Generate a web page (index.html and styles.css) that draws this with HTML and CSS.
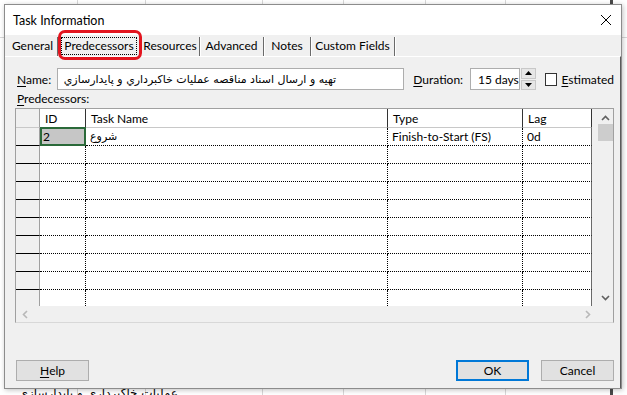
FILE: index.html
```html
<!DOCTYPE html>
<html>
<head>
<meta charset="utf-8">
<link rel="stylesheet" href="styles.css">
</head>
<body>
<div class="backdrop">
  <div class="back-text" dir="rtl">عمليات خاکبرداري و پايدارسازي</div>
</div>
<div class="dialog">
  <div class="titlebar">
    <span class="title">Task Information</span>
    <svg class="close" width="12" height="12" viewBox="0 0 12 12"><path d="M1 1 L11 11 M11 1 L1 11" stroke="#000" stroke-width="1" fill="none"/></svg>
  </div>
  <div class="tabs">
    <div class="tab t-gen">General</div>
    <div class="tab t-pred active"><span class="focus">Predecessors</span><span class="mark"></span></div>
    <div class="tab t-res">Resources</div>
    <div class="tab t-adv">Advanced</div>
    <div class="tab t-notes">Notes</div>
    <div class="tab t-cf">Custom Fields</div>
  </div>
  <div class="panel">
    <div class="row-name">
      <label class="lbl-name"><u>N</u>ame:</label>
      <div class="input name-input">تهيه و ارسال اسناد مناقصه عمليات خاکبرداري و پايدارسازي</div>
      <label class="lbl-dur"><u>D</u>uration:</label>
      <div class="input dur-input">15 days</div>
      <div class="spin">
        <div class="spin-btn"><svg width="7" height="4" viewBox="0 0 7 4"><path d="M0 4 L3.5 0 L7 4 Z" fill="#000"/></svg></div>
        <div class="spin-btn"><svg width="7" height="4" viewBox="0 0 7 4"><path d="M0 0 L3.5 4 L7 0 Z" fill="#000"/></svg></div>
      </div>
      <div class="check"></div>
      <label class="lbl-est"><u>E</u>stimated</label>
    </div>
    <div class="lbl-pred"><u>P</u>redecessors:</div>
    <div class="grid">
      <div class="table">
        <div class="tr head">
          <div class="td rh"></div>
          <div class="td c-id">ID</div>
          <div class="td c-name">Task Name</div>
          <div class="td c-type">Type</div>
          <div class="td c-lag">Lag</div>
        </div>
        <div class="tr">
          <div class="td rh"></div>
          <div class="td c-id sel">2</div>
          <div class="td c-name"><span dir="rtl">شروع</span></div>
          <div class="td c-type">Finish-to-Start (FS)</div>
          <div class="td c-lag">0d</div>
        </div>
        <div class="tr"><div class="td rh"></div><div class="td c-id"></div><div class="td c-name"></div><div class="td c-type"></div><div class="td c-lag"></div></div>
        <div class="tr"><div class="td rh"></div><div class="td c-id"></div><div class="td c-name"></div><div class="td c-type"></div><div class="td c-lag"></div></div>
        <div class="tr"><div class="td rh"></div><div class="td c-id"></div><div class="td c-name"></div><div class="td c-type"></div><div class="td c-lag"></div></div>
        <div class="tr"><div class="td rh"></div><div class="td c-id"></div><div class="td c-name"></div><div class="td c-type"></div><div class="td c-lag"></div></div>
        <div class="tr"><div class="td rh"></div><div class="td c-id"></div><div class="td c-name"></div><div class="td c-type"></div><div class="td c-lag"></div></div>
        <div class="tr"><div class="td rh"></div><div class="td c-id"></div><div class="td c-name"></div><div class="td c-type"></div><div class="td c-lag"></div></div>
        <div class="tr"><div class="td rh"></div><div class="td c-id"></div><div class="td c-name"></div><div class="td c-type"></div><div class="td c-lag"></div></div>
        <div class="tr"><div class="td rh"></div><div class="td c-id"></div><div class="td c-name"></div><div class="td c-type"></div><div class="td c-lag"></div></div>
        <div class="tr"><div class="td rh"></div><div class="td c-id"></div><div class="td c-name"></div><div class="td c-type"></div><div class="td c-lag"></div></div>
      </div>
      <div class="vscroll">
        <svg class="arr" width="9" height="6" viewBox="0 0 9 6"><path d="M1 5 L4.5 1.5 L8 5" stroke="#606060" stroke-width="1.6" fill="none"/></svg>
        <div class="thumb"></div>
        <div class="vspace"></div>
        <svg class="arr" width="9" height="6" viewBox="0 0 9 6"><path d="M1 1 L4.5 4.5 L8 1" stroke="#606060" stroke-width="1.6" fill="none"/></svg>
      </div>
      <div class="hscroll">
        <svg width="6" height="9" viewBox="0 0 6 9"><path d="M5 1 L1.5 4.5 L5 8" stroke="#b8b8b8" stroke-width="1.6" fill="none"/></svg>
        <svg width="6" height="9" viewBox="0 0 6 9"><path d="M1 1 L4.5 4.5 L1 8" stroke="#b8b8b8" stroke-width="1.6" fill="none"/></svg>
      </div>
    </div>
    <div class="buttons">
      <div class="btn"><u>H</u>elp</div>
      <div class="spacer"></div>
      <div class="btn default">OK</div>
      <div class="btn">Cancel</div>
    </div>
  </div>
</div>
</body>
</html>
```
FILE: styles.css
```css
* { box-sizing: border-box; }
html, body { margin: 0; padding: 0; }
body {
  width: 627px;
  height: 395px;
  overflow: hidden;
  position: relative;
  background-color: #ffffff;
  background-image:
    linear-gradient(to right, transparent 77px, #d8d8d8 77px, #d8d8d8 78px, transparent 78px),
    linear-gradient(to right, transparent 145px, #d8d8d8 145px, #d8d8d8 146px, transparent 146px),
    linear-gradient(to right, transparent 262px, #d8d8d8 262px, #d8d8d8 263px, transparent 263px),
    linear-gradient(to right, transparent 343px, #d8d8d8 343px, #d8d8d8 344px, transparent 344px),
    linear-gradient(to right, transparent 425px, #d8d8d8 425px, #d8d8d8 426px, transparent 426px),
    linear-gradient(to right, transparent 505px, #d8d8d8 505px, #d8d8d8 506px, transparent 506px),
    linear-gradient(to right, transparent 610px, #4a4a4a 610px, #4a4a4a 613px, transparent 613px),
    linear-gradient(to bottom, transparent 37px, #d8d8d8 37px, #d8d8d8 38px, transparent 38px);
  font-family: "Lato", "DejaVu Sans", sans-serif;
  font-size: 12px;
  color: #000;
}
.backdrop { position: absolute; inset: 0; }
.back-text {
  position: absolute;
  left: 18px;
  top: 386px;
  width: 160px;
  font-size: 12px;
  line-height: 14px;
  font-family: "DejaVu Sans", sans-serif;
  color: #000;
  white-space: nowrap;
}
.dialog {
  position: absolute;
  left: 4px;
  top: 4px;
  width: 618px;
  height: 385px;
  border: 1px solid #8c8c8c;
  background: #f0f0f0;
  box-shadow: 1px 1px 5px rgba(0,0,0,0.25);
  display: flex;
  flex-direction: column;
}
.titlebar {
  height: 30px;
  background: #fff;
  display: flex;
  align-items: center;
  padding-left: 8px;
  padding-right: 9px;
  flex: none;
}
.title { flex: 1; font-size: 12.5px; padding-top: 1px; }
.close { display: block; }
.tabs {
  height: 21px;
  flex: none;
  display: flex;
  align-items: stretch;
  padding-left: 3px;
  padding-top: 2px;
}
.tab {
  position: relative;
  flex: none;
  display: flex;
  align-items: center;
  justify-content: center;
  border-right: 1px solid #6a6a6a;
  box-shadow: 1px 0 0 #ffffff;
  line-height: 1;
  padding-bottom: 1px;
}
.t-gen { width: 50px; }
.t-pred { width: 83px; }
.t-res { width: 59px; }
.t-adv { width: 64px; }
.t-notes { width: 47px; }
.t-cf { width: 84px; }
.focus {
  outline: 1px dotted #000;
  padding: 2px 2px;
}
.mark {
  position: absolute;
  left: 0;
  right: -2px;
  top: -7px;
  bottom: -4px;
  border: 3px solid #e3151f;
  border-radius: 7px;
}
.panel {
  flex: 1;
  border-top: 1px solid #fff;
  border-right: 1px solid #5a5a5a;
  padding: 11px 6px 7px 11px;
  display: flex;
  flex-direction: column;
}
.row-name {
  display: flex;
  align-items: center;
  height: 22px;
}
.lbl-name { width: 41px; padding-left: 1px; }
.input {
  height: 22px;
  background: #fff;
  border: 1px solid #adadad;
  display: flex;
  align-items: center;
  padding-left: 6px;
  white-space: nowrap;
  overflow: hidden;
}
.name-input { width: 350px; font-family: "DejaVu Sans", sans-serif; font-size: 11px; }
.lbl-dur { margin-left: 9px; width: 57px; }
.dur-input { width: 50px; padding-left: 7px; }
.spin {
  width: 15px;
  height: 22px;
  margin-left: 1px;
  display: flex;
  flex-direction: column;
  gap: 1px;
}
.spin-btn {
  flex: 1;
  background: #e6e6e6;
  border: 1px solid #c8c8c8;
  display: flex;
  align-items: center;
  justify-content: center;
}
.spin-btn svg { display: block; }
.check {
  width: 13px;
  height: 13px;
  border: 1px solid #333;
  background: #fff;
  margin-left: 9px;
}
.lbl-est { margin-left: 4px; }
.lbl-pred { margin-top: 2px; height: 16px; padding-left: 1px; line-height: 14px; }
.grid {
  width: 599px;
  margin-left: -1px;
  border: 1px solid #a0a0a0;
  border-bottom: 1px solid #d8d8d8;
  display: grid;
  grid-template-columns: 576px 21px;
  grid-template-rows: 197px 16px;
  background: #fff;
}
.table { overflow: hidden; }
.tr { display: flex; height: 18px; }
.tr.head { height: 19px; }
.td {
  height: 100%;
  border-bottom: 1px dotted #000;
  border-right: 1px dotted #000;
  padding-left: 4px;
  display: flex;
  align-items: center;
  white-space: nowrap;
  overflow: hidden;
}
.head .td { border-bottom: 1px solid #c8c8c8; border-right: 1px solid #333; padding-left: 5px; }
.td.rh { width: 24px; background: #f0f0f0; border-right: 1px solid #a0a0a0; border-bottom: 1px solid #000; }
.head .td.rh { border-right: 1px solid #a0a0a0; border-bottom: 1px solid #c8c8c8; background: #f0f0f0; }
.c-id { width: 46px; }
.c-name { width: 302px; }
.c-type { width: 135px; }
.c-lag { width: 69px; }
.head .c-lag { border-right: 1px solid #333; }
.tr:not(.head) .c-lag { border-right: 1px solid #6a6a6a; }
.td.sel {
  background: #c6c6c6;
  border: 2px solid #2b6a3a;
  padding-left: 1px;
  margin-top: -1px;
  height: 19px;
}
.c-name span { font-family: "DejaVu Sans", sans-serif; font-size: 11px; }
.vscroll {
  background: #f0f0f0;
  display: flex;
  flex-direction: column;
  align-items: center;
  padding-left: 6px;
  padding-top: 6px;
  padding-bottom: 5px;
}
.arr { display: block; flex: none; }
.thumb { width: 15px; height: 17px; background: #cdcdcd; margin-top: 3px; flex: none; }
.vspace { flex: 1; }
.hscroll {
  grid-column: 1 / 3;
  background: #f0f0f0;
  display: flex;
  align-items: center;
  justify-content: space-between;
  padding: 0 22px 0 6px;
}
.hscroll svg { display: block; }
.buttons {
  margin-top: auto;
  display: flex;
  gap: 12px;
}
.spacer { flex: 1; }
.btn {
  width: 73px;
  height: 21px;
  background: #e1e1e1;
  border: 1px solid #adadad;
  display: flex;
  align-items: center;
  justify-content: center;
  padding-bottom: 1px;
}
.btn.default { border: 2px solid #0078d7; }
u { text-decoration: underline; text-underline-offset: 2px; }
```
